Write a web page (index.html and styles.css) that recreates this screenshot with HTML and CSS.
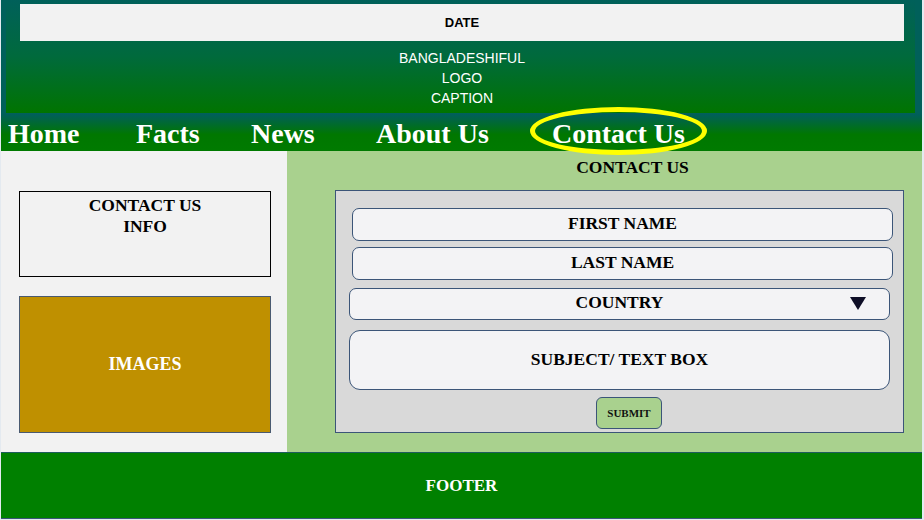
FILE: index.html
```html
<!DOCTYPE html>
<html lang="en">
<head>
<meta charset="utf-8">
<title>Contact Us</title>
<link rel="stylesheet" href="styles.css">
</head>
<body>
<div class="page">
  <header class="header">
    <div class="header-inner">
      <div class="date">DATE</div>
      <div class="caption">BANGLADESHIFUL<br>LOGO<br>CAPTION</div>
    </div>
  </header>
  <nav class="nav">
    <a class="nav-link">Home</a>
    <a class="nav-link">Facts</a>
    <a class="nav-link">News</a>
    <a class="nav-link">About Us</a>
    <a class="nav-link nav-active">Contact Us<span class="ring"></span></a>
  </nav>
  <main class="main">
    <aside class="side">
      <div class="info">CONTACT US<br>INFO</div>
      <div class="images">IMAGES</div>
    </aside>
    <section class="content">
      <h1 class="heading">CONTACT US</h1>
      <form class="panel">
        <div class="field field-name">FIRST NAME</div>
        <div class="field field-name field-last">LAST NAME</div>
        <div class="field field-country">COUNTRY<span class="arrow"></span></div>
        <div class="field field-subject">SUBJECT/ TEXT BOX</div>
        <div class="submit">SUBMIT</div>
      </form>
    </section>
  </main>
  <footer class="footer">FOOTER</footer>
</div>
</body>
</html>
```
FILE: styles.css
```css
* { box-sizing: border-box; }
html, body { margin: 0; padding: 0; }
body {
  background: #e4eaf0;
  font-family: "Liberation Serif", "Times New Roman", serif;
  color: #000;
}
.page {
  margin-left: 1px;
  width: 921px;
}

/* header */
.header {
  height: 114px;
  background: #00605a;
  padding: 0 7px 0 5px;
}
.header-inner {
  height: 113px;
  background: linear-gradient(#00605a, #006a3c 50%, #007400);
  padding-top: 4px;
}
.date {
  margin: 0 11px 0 14px;
  height: 37px;
  background: #f2f2f2;
  display: flex;
  align-items: center;
  justify-content: center;
  font-family: "Liberation Sans", Arial, sans-serif;
  font-weight: bold;
  font-size: 13px;
  color: #000;
}
.caption {
  margin-top: 7px;
  text-align: center;
  font-family: "Liberation Sans", Arial, sans-serif;
  font-size: 14px;
  line-height: 20px;
  color: #fff;
  padding-left: 3px;
}

/* nav */
.nav {
  position: relative;
  z-index: 1;
  height: 37px;
  background: linear-gradient(#005e5c, #007700 55%, #007a00);
  display: grid;
  grid-template-columns: 128px 115px 125px 176px auto;
  padding-left: 7px;
}
.nav-link {
  position: relative;
  display: block;
  font-weight: bold;
  font-size: 28px;
  line-height: 37px;
  padding-top: 1px;
  color: #fff;
  white-space: nowrap;
}
.ring {
  position: absolute;
  left: -22px;
  top: -7px;
  width: 177px;
  height: 48px;
  border: 5px solid #ffff00;
  border-radius: 50%;
}

/* main */
.main {
  display: flex;
  height: 301px;
}
.side {
  width: 286px;
  background: #f2f2f2;
  padding: 40px 16px 0 18px;
}
.info {
  height: 86px;
  border: 1px solid #000;
  text-align: center;
  font-weight: bold;
  font-size: 17.5px;
  line-height: 20.5px;
  padding-top: 3px;
}
.images {
  margin-top: 19px;
  height: 137px;
  background: #bf9000;
  border: 1px solid #4a5a70;
  display: flex;
  align-items: center;
  justify-content: center;
  color: #fff;
  font-weight: bold;
  font-size: 18px;
}
.content {
  flex: 1;
  background: #a9d18e;
  padding: 6px 18px 0 48px;
}
.heading {
  margin: 0;
  padding-left: 26px;
  text-align: center;
  font-weight: bold;
  font-size: 17.5px;
  line-height: 20px;
}
.panel {
  margin: 13px 0 0 0;
  height: 243px;
  background: #d9d9d9;
  border: 1px solid #3b5578;
  display: flex;
  flex-direction: column;
  padding: 17px 0 0 0;
}
.field {
  position: relative;
  background: #f3f3f5;
  border: 1px solid #3b5578;
  border-radius: 7px;
  display: flex;
  align-items: center;
  justify-content: center;
  font-weight: bold;
  font-size: 17.5px;
  padding-bottom: 3px;
}
.field-name {
  height: 33px;
  margin: 0 10px 0 16px;
}
.field-last {
  margin-top: 6px;
}
.field-country {
  height: 32px;
  margin: 8px 13px 0 13px;
}
.arrow {
  position: absolute;
  right: 23px;
  top: 8px;
  width: 0;
  height: 0;
  border-left: 8px solid transparent;
  border-right: 8px solid transparent;
  border-top: 13px solid #0e0e26;
}
.field-subject {
  height: 60px;
  margin: 10px 13px 0 13px;
  border-radius: 11px;
  padding-bottom: 2px;
}
.submit {
  margin: 7px 0 0 260px;
  width: 66px;
  height: 32px;
  background: #a9d18e;
  border: 1px solid #3b5578;
  border-radius: 6px;
  display: flex;
  align-items: center;
  justify-content: center;
  font-weight: bold;
  font-size: 11px;
  color: #111;
}

/* footer */
.footer {
  height: 67px;
  background: #008000;
  border-top: 1px solid #1d5d5d;
  border-bottom: 1px solid #3b5578;
  display: flex;
  align-items: center;
  justify-content: center;
  color: #fff;
  font-weight: bold;
  font-size: 17px;
}
```
